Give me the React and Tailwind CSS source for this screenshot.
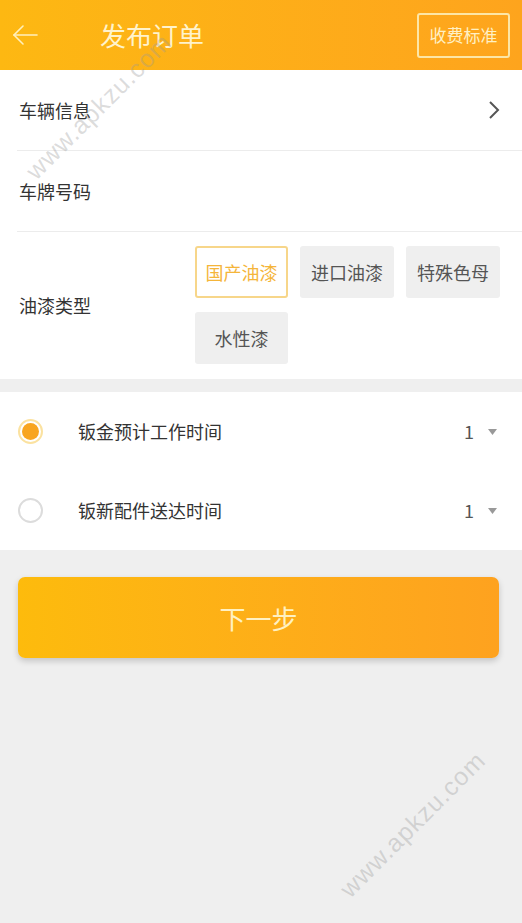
import React, { useState } from "react";

const FONT = { fontFamily: '"Noto Sans CJK SC", "Noto Sans", sans-serif' };

const paints = ["国产油漆", "进口油漆", "特殊色母", "水性漆"];

const times = [
  { id: "sheet", label: "钣金预计工作时间", value: 1 },
  { id: "parts", label: "钣新配件送达时间", value: 1 },
];

const Watermark = ({ className }) => (
  <div
    className={`pointer-events-none absolute -rotate-45 text-[25px] tracking-[1px] text-[#9a9a9a]/35 ${className}`}
    style={{ fontFamily: '"Liberation Sans", sans-serif' }}
  >
    www.apkzu.com
  </div>
);

const App = () => {
  const [paint, setPaint] = useState(paints[0]);
  const [timeType, setTimeType] = useState("sheet");

  return (
    <div className="relative min-h-[923px] w-[522px] overflow-hidden bg-[#efefef]" style={FONT}>
      {/* header */}
      <div className="flex h-[70px] items-center bg-gradient-to-r from-[#fdb812] to-[#fea41d] pr-[12px]">
        <button className="flex h-full w-[48px] items-center justify-center pl-[2px]">
          <svg width="28" height="22" viewBox="0 0 28 22" fill="none" stroke="#fff0bd" strokeWidth="1.6" strokeLinecap="round">
            <path d="M26 11H3" />
            <path d="M12 2L3 11l9 9" />
          </svg>
        </button>
        <h1 className="ml-[52px] text-[26px] leading-none text-[#fff3cc]">发布订单</h1>
        <button className="ml-auto flex h-[45px] w-[93px] items-center justify-center rounded-[3px] border-2 border-[#fde6a6] text-[17px] text-[#fff0c4]">
          收费标准
        </button>
      </div>

      {/* vehicle */}
      <div className="bg-white">
        <div className="ml-[17px] flex h-[81px] items-center justify-between border-b border-[#ececec] pl-[2px] pr-[22px]">
          <span className="text-[18px] text-[#333]">车辆信息</span>
          <svg width="12" height="20" viewBox="0 0 12 20" fill="none" stroke="#555" strokeWidth="2">
            <path d="M2 2l8 8-8 8" />
          </svg>
        </div>
        <div className="ml-[17px] flex h-[81px] items-center border-b border-[#ececec] pl-[2px]">
          <span className="text-[18px] text-[#333]">车牌号码</span>
        </div>
        <div className="flex items-center pb-[15px] pt-[14px]">
          <span className="w-[195px] pl-[19px] text-[18px] text-[#333]">油漆类型</span>
          <div className="grid grid-cols-[93px_94px_94px] gap-x-[12px] gap-y-[14px]">
            {paints.map((p) => (
              <button
                key={p}
                onClick={() => setPaint(p)}
                className={`flex h-[52px] items-center justify-center rounded-[3px] text-[18px] ${
                  paint === p
                    ? "border-2 border-[#f7d68a] bg-white text-[#f5b53a]"
                    : "bg-[#efefef] text-[#555]"
                }`}
              >
                {p}
              </button>
            ))}
          </div>
        </div>
      </div>

      {/* time */}
      <div className="mt-[13px] bg-white">
        {times.map((t) => (
          <div key={t.id} className="flex h-[79px] items-center pl-[18px] pr-[25px]">
            <button
              onClick={() => setTimeType(t.id)}
              className={`flex h-[25px] w-[25px] items-center justify-center rounded-full border-2 ${
                timeType === t.id ? "border-[#fbe2a0]" : "border-[#dcdcdc]"
              }`}
            >
              {timeType === t.id && <span className="h-[17px] w-[17px] rounded-full bg-[#f8a51f]" />}
            </button>
            <span className="ml-[35px] text-[18px] text-[#333]">{t.label}</span>
            <span className="ml-auto text-[18px] text-[#555]">{t.value}</span>
            <svg className="ml-[14px]" width="9" height="6" viewBox="0 0 9 6">
              <path d="M0 0h9L4.5 6z" fill="#999" />
            </svg>
          </div>
        ))}
      </div>

      {/* next */}
      <div className="pl-[18px] pr-[23px] pt-[27px]">
        <button className="flex h-[81px] w-full items-center justify-center rounded-[7px] bg-gradient-to-r from-[#fdbb0c] to-[#fea21f] text-[26px] text-[#fff1c2] shadow-[0_3px_6px_rgba(0,0,0,0.18)]">
          下一步
        </button>
      </div>

      <Watermark className="left-[2px] top-[88px]" />
      <Watermark className="left-[316px] top-[806px]" />
    </div>
  );
};

export default App;
